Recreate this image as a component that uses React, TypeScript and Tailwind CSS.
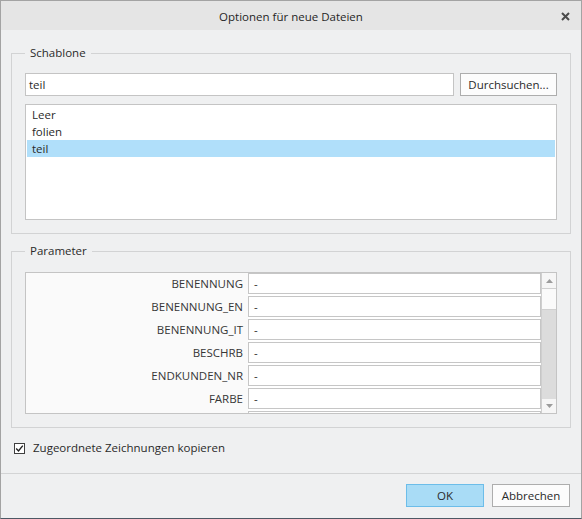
const PARAMS = ['BENENNUNG', 'BENENNUNG_EN', 'BENENNUNG_IT', 'BESCHRB', 'ENDKUNDEN_NR', 'FARBE', '']
const TEMPLATES = ['Leer', 'folien', 'teil']

function Arrow({ up }: { up?: boolean }) {
  return (
    <svg width="7" height="4" viewBox="0 0 7 4">
      <path d={up ? 'M0 4 L3.5 0 L7 4 Z' : 'M0 0 L3.5 4 L7 0 Z'} fill="#9c9c9c" />
    </svg>
  )
}

export default function App() {
  return (
    <div className="w-[582px] h-[519px] bg-[#eff0f1] border-x border-t border-[#a3a3a3] border-b border-b-[#4d5864] flex flex-col text-[11.5px] text-[#2a2a2a] [font-family:'Open_Sans','Noto_Sans',sans-serif]">

      {/* TITLE BAR */}
      <div className="relative h-[29px] shrink-0 bg-[#e5e5e5] flex items-center justify-center pt-[3px] text-[#262626]">
        Optionen für neue Dateien
        <svg className="absolute right-[11px] top-[11px]" width="9" height="9" viewBox="0 0 9 9">
          <path d="M1 1 L8 8 M8 1 L1 8" stroke="#4a4a4a" strokeWidth="2" />
        </svg>
      </div>

      {/* BODY */}
      <div className="flex-1 px-[10px]">

        <fieldset className="mt-[15px] border border-[#d2d3d4] px-[13px] pt-[12px] pb-[13px]">
          <legend className="px-[5px] leading-[16px]">Schablone</legend>
          <div className="flex gap-[6px]">
            <div className="flex-1 h-[23px] border border-[#c4c4c4] bg-white pl-[3px] leading-[21px]">teil</div>
            <button className="w-[97px] h-[23px] border border-[#adadad] bg-[#fcfcfc] leading-[21px]">Durchsuchen...</button>
          </div>
          <div className="mt-[8px] h-[116px] border border-[#c4c4c4] bg-white pt-[1px] px-[1px]">
            {TEMPLATES.map(t => (
              <div key={t} className={`h-[17px] leading-[17px] pl-[5px] ${t === 'teil' ? 'bg-[#b0dffa]' : ''}`}>{t}</div>
            ))}
          </div>
        </fieldset>

        <fieldset className="mt-[9px] border border-[#d2d3d4] px-[13px] pt-[13px] pb-[13px]">
          <legend className="px-[5px] leading-[16px]">Parameter</legend>
          <div className="h-[142px] border border-[#c4c4c4] bg-white flex">
            <div className="flex-1 overflow-hidden">
              {PARAMS.map((p, i) => (
                <div key={i} className="flex h-[23px] shrink-0">
                  <div className="w-[222px] shrink-0 bg-[#fafafa] text-right pr-[5px] leading-[21px] text-[#363636]">{p}</div>
                  <div className="flex-1 h-[21px] border border-[#c6c6c6] bg-white pl-[5px] leading-[19px]">{p ? '-' : ''}</div>
                </div>
              ))}
            </div>
            <div className="w-[15px] shrink-0 border-l border-[#cfcfcf] flex flex-col">
              <div className="h-[15px] bg-[#f6f6f6] flex items-center justify-center"><Arrow up /></div>
              <div className="h-[22px] bg-[#fafafa] border-y border-[#d0d0d0]" />
              <div className="flex-1 bg-[#dcdcdc]" />
              <div className="h-[14px] bg-[#f6f6f6] flex items-center justify-center"><Arrow /></div>
            </div>
          </div>
        </fieldset>

        <label className="mt-[12px] pl-[3px] flex items-center gap-[8px] h-[16px]">
          <span className="w-[11px] h-[11px] border border-[#3f3f3f] bg-white flex items-center justify-center">
            <svg width="9" height="9" viewBox="0 0 9 9">
              <path d="M1.2 4.6 L3.5 7 L7.8 1.6" stroke="#222" strokeWidth="1.4" fill="none" />
            </svg>
          </span>
          Zugeordnete Zeichnungen kopieren
        </label>
      </div>

      {/* FOOTER */}
      <div className="h-[45px] shrink-0 border-t border-[#d3d4d5] pt-[10px] pr-[11px] flex justify-end gap-[8px]">
        <button className="w-[78px] h-[23px] border border-[#6cbde9] bg-[#a9dcf6]">OK</button>
        <button className="w-[78px] h-[23px] border border-[#adadad] bg-[#fcfcfc]">Abbrechen</button>
      </div>
    </div>
  )
}
